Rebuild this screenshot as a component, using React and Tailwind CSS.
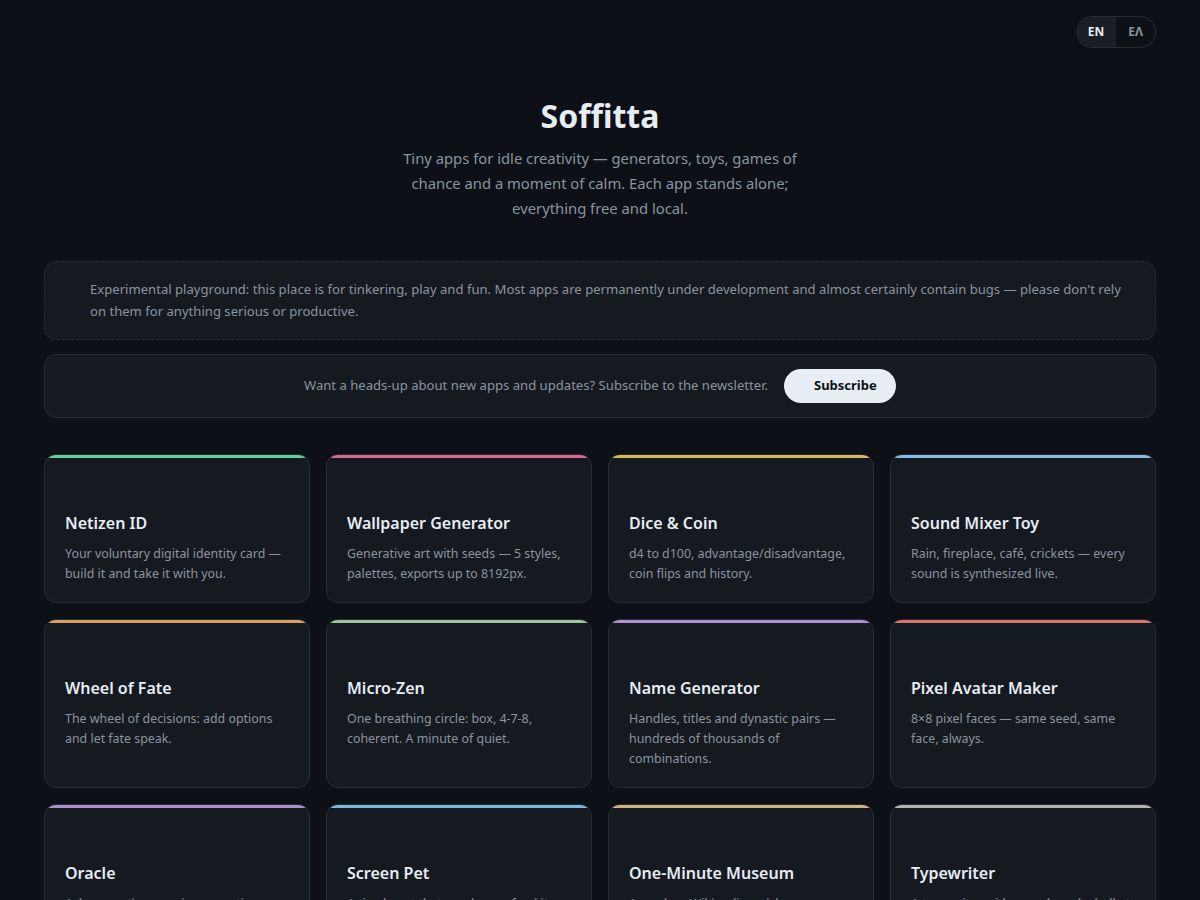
import React from 'react';

const APPS = [
  { name: 'Netizen ID', desc: 'Your voluntary digital identity card — build it and take it with you.', color: '#5fcfa3' },
  { name: 'Wallpaper Generator', desc: 'Generative art with seeds — 5 styles, palettes, exports up to 8192px.', color: '#d9678e' },
  { name: 'Dice & Coin', desc: 'd4 to d100, advantage/disadvantage, coin flips and history.', color: '#d8bb5c' },
  { name: 'Sound Mixer Toy', desc: 'Rain, fireplace, café, crickets — every sound is synthesized live.', color: '#86b6e2' },
  { name: 'Wheel of Fate', desc: 'The wheel of decisions: add options and let fate speak.', color: '#dd9e5e' },
  { name: 'Micro-Zen', desc: 'One breathing circle: box, 4-7-8, coherent. A minute of quiet.', color: '#9cc69a' },
  { name: 'Name Generator', desc: 'Handles, titles and dynastic pairs — hundreds of thousands of combinations.', color: '#ae90d8' },
  { name: 'Pixel Avatar Maker', desc: '8×8 pixel faces — same seed, same face, always.', color: '#d9746a' },
  { name: 'Oracle', desc: 'Ask a question, receive a cryptic answer from the void.', color: '#a990cc' },
  { name: 'Screen Pet', desc: 'A tiny beast that needs you: feed it, play, put it to sleep.', color: '#7ab8da' },
  { name: 'One-Minute Museum', desc: 'A random Wikipedia article, one minute to wander through it.', color: '#cfb57f' },
  { name: 'Typewriter', desc: 'A typewriter with sounds and a bell at the end of the line.', color: '#b4b2b0' },
];

function AppCard({ app }) {
  return (
    <div className="rounded-xl border border-[#262c35] bg-[#151a21] overflow-hidden">
      <div className="h-[3px]" style={{ backgroundColor: app.color }} />
      <div className="px-5 pt-[53px] pb-[18px]">
        <h3 className="text-[16px] leading-6 font-semibold text-[#e6edf3] mb-[9px]">{app.name}</h3>
        <p className="text-[12.4px] leading-5 text-[#8b949e]">{app.desc}</p>
      </div>
    </div>
  );
}

export default function App() {
  return (
    <div className="min-h-screen bg-[#0d1117] font-['Noto_Sans',sans-serif]">
      <div className="max-w-[1112px] mx-auto">
        {/* language switch */}
        <div className="flex justify-end pt-4">
          <div className="flex items-center rounded-full border border-[#262c35] overflow-hidden text-xs font-bold">
            <span className="pl-[11px] pr-3 py-[7px] bg-[#1a1f27] text-[#e6edf3]">EN</span>
            <span className="px-3 py-[7px] text-[#8b949e]">EΛ</span>
          </div>
        </div>

        <header className="text-center mt-[48px]">
          <h1 className="text-[32px] leading-10 font-bold text-[#e6edf3]">Soffitta</h1>
          <p className="mt-[10px] mx-auto max-w-[400px] text-[14.8px] leading-[25px] text-[#8b949e]">
            Tiny apps for idle creativity — generators, toys, games of chance and a moment of calm. Each app stands alone; everything free and local.
          </p>
        </header>

        <div className="mt-[40px] rounded-xl border border-dashed border-[#2a3039] bg-[#151a21] pt-4 pb-[17px] pl-[45px] pr-8">
          <p className="text-[13.1px] leading-[22px] text-[#8b949e]">
            Experimental playground: this place is for tinkering, play and fun. Most apps are permanently under development and almost certainly contain bugs — please don't rely on them for anything serious or productive.
          </p>
        </div>

        <div className="mt-[14px] rounded-xl border border-[#262c35] bg-[#151a21] py-[14px] flex items-center justify-center gap-4">
          <span className="text-[13.1px] text-[#8b949e]">Want a heads-up about new apps and updates? Subscribe to the newsletter.</span>
          <button className="h-[34px] w-[112px] rounded-full bg-[#e6edf3] text-[#0d1117] text-[13px] font-bold text-left pl-[30px]">Subscribe</button>
        </div>

        <div className="mt-[36px] grid grid-cols-4 gap-4 pb-10">
          {APPS.map((app) => (
            <AppCard key={app.name} app={app} />
          ))}
        </div>
      </div>
    </div>
  );
}
